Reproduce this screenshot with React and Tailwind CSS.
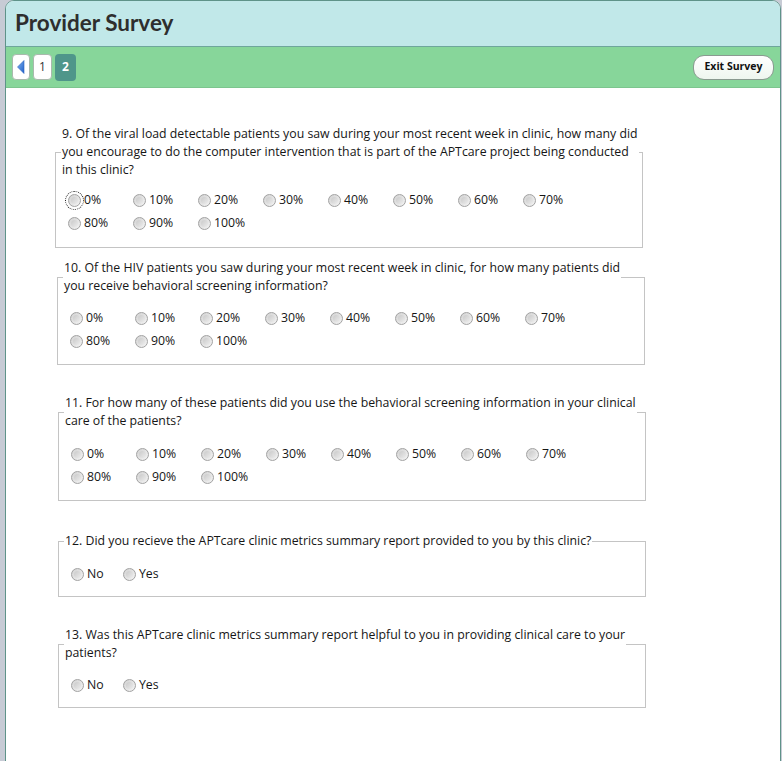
const PCT = ["0%", "10%", "20%", "30%", "40%", "50%", "60%", "70%", "80%", "90%", "100%"]
const YESNO = ["No", "Yes"]

const QUESTIONS = [
  {
    id: 9,
    lines: [
      "9. Of the viral load detectable patients you saw during your most recent week in clinic, how many did",
      "you encourage to do the computer intervention that is part of the APTcare project being conducted",
      "in this clinic?",
    ],
    options: PCT,
    box: "mt-[37px] ml-[49px]",
    pad: "pt-[10px] pb-[12px]",
    focusFirst: true,
  },
  {
    id: 10,
    lines: [
      "10. Of the HIV patients you saw during your most recent week in clinic, for how many patients did",
      "you receive behavioral screening information?",
    ],
    options: PCT,
    box: "mt-[11px] ml-[51px]",
    pad: "pt-[12px] pb-[11px]",
  },
  {
    id: 11,
    lines: [
      "11. For how many of these patients did you use the behavioral screening information in your clinical",
      "care of the patients?",
    ],
    options: PCT,
    box: "mt-[29px] ml-[52px]",
    pad: "pt-[13px] pb-[11px]",
  },
  {
    id: 12,
    lines: ["12. Did you recieve the APTcare clinic metrics summary report provided to you by this clinic?"],
    options: YESNO,
    box: "mt-[31px] ml-[52px]",
    pad: "pt-[13px] pb-[10px]",
  },
  {
    id: 13,
    lines: [
      "13. Was this APTcare clinic metrics summary report helpful to you in providing clinical care to your",
      "patients?",
    ],
    options: YESNO,
    box: "mt-[29px] ml-[52px]",
    pad: "pt-[12px] pb-[10px]",
  },
]

function Radio({ focused }) {
  return (
    <span className={`relative flex h-[13px] w-[13px] shrink-0 items-center justify-center rounded-full border border-[#a2a2a2] bg-gradient-to-br from-[#d2d2d2] to-[#f4f4f4] ${focused ? "outline outline-1 outline-dotted outline-[#222] outline-offset-[2px]" : ""}`}>
      <span className="h-[7px] w-[7px] rounded-full bg-gradient-to-br from-[#cacaca] to-[#ececec]" />
    </span>
  )
}

function Question({ q }) {
  const wide = q.options.length > 2
  return (
    <fieldset className={`w-[588px] border border-[#c4c4c4] pl-[5px] ${q.box}`}>
      <legend className="px-[1px] leading-[18px]">
        {q.lines.map((l, i) => (
          <span key={i} className="block whitespace-nowrap">{l}</span>
        ))}
      </legend>
      <div className={`flex flex-wrap pl-[7px] ${q.pad} ${wide ? "w-[532px]" : ""}`}>
        {q.options.map((o, i) => (
          <label key={o} className={`flex h-[23px] items-center gap-[3px] ${wide ? "w-[65px]" : "w-[52px]"}`}>
            <Radio focused={q.focusFirst && i === 0} />
            <span>{o}</span>
          </label>
        ))}
      </div>
    </fieldset>
  )
}

export default function App() {
  return (
    <div className="h-[761px] overflow-hidden bg-[#c7cbd5] pl-[5px] pr-[1px] font-['Open_Sans',sans-serif] text-[12.3px] text-[#161616]">
      <div className="flex h-[780px] flex-col overflow-hidden rounded-t-[9px] border border-[#5f9389] bg-white">
        {/* Header */}
        <div className="flex h-[46px] shrink-0 items-center border-b border-[#6fa69c] bg-[#c1e8e9] px-[9px]">
          <h1 className="font-['Lato',sans-serif] text-[22.5px] font-bold text-[#2e2e2e] pb-[2px]">Provider Survey</h1>
        </div>

        {/* Page nav */}
        <div className="flex h-[41px] shrink-0 items-center justify-between border-b border-[#7cc58e] bg-[#87d69a] pl-[6px] pr-[6px]">
          <div className="flex items-center gap-[3px]">
            <button className="flex h-[26px] w-[18px] items-center justify-center rounded-[4px] border border-[#a9b9ad] bg-white">
              <svg width="8" height="14" viewBox="0 0 8 14">
                <defs>
                  <linearGradient id="arr" x1="0" y1="0" x2="1" y2="1">
                    <stop offset="0" stopColor="#7fb1ef" />
                    <stop offset="1" stopColor="#1f5fc9" />
                  </linearGradient>
                </defs>
                <path d="M7 0.5 L7 13.5 L0.5 7 Z" fill="url(#arr)" stroke="#2a62c0" strokeWidth="0.6" />
              </svg>
            </button>
            <button className="flex h-[26px] w-[19px] items-center justify-center rounded-[4px] border border-[#a9b9ad] bg-white text-[12px] text-[#333]">1</button>
            <button className="flex h-[27px] w-[21px] items-center justify-center rounded-[4px] bg-[#4f968a] text-[12px] font-bold text-white">2</button>
          </div>
          <button className="flex h-[25px] w-[81px] items-center justify-center rounded-[11px] border border-[#8a9a90] bg-gradient-to-b from-white to-[#eef6ef] text-[10.5px] font-bold text-[#111]">
            Exit Survey
          </button>
        </div>

        {/* Questions */}
        <div className="flex flex-col">
          {QUESTIONS.map(q => (
            <Question key={q.id} q={q} />
          ))}
        </div>
      </div>
    </div>
  )
}
